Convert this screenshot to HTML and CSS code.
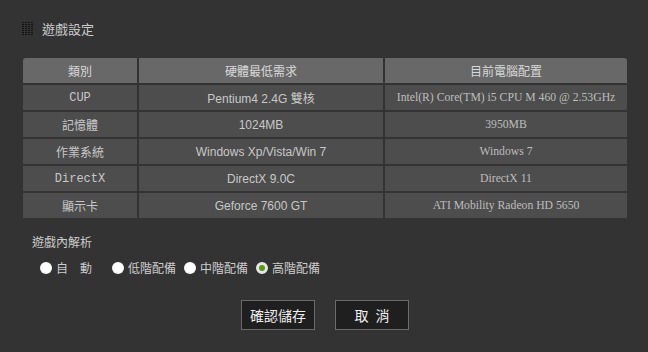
FILE: index.html
```html
<!DOCTYPE html>
<html lang="zh-Hant">
<head>
    <meta charset="UTF-8">
    <meta name="viewport" content="width=device-width, initial-scale=1.0">
    <title>遊戲設定</title>
    <link rel="stylesheet" href="styles.css">
</head>
<body>
    <div class="panel">
        <div class="title">
            <svg class="title-icon" width="12" height="14" viewBox="0 0 12 14">
                <defs>
                    <pattern id="dots" width="3" height="2" patternUnits="userSpaceOnUse">
                        <rect x="0" y="0" width="2" height="1" fill="#111"/>
                    </pattern>
                </defs>
                <rect width="12" height="14" fill="url(#dots)"/>
            </svg>
            <span>遊戲設定</span>
        </div>

        <div class="spec-table">
            <div class="cell head first">類別</div>
            <div class="cell head">硬體最低需求</div>
            <div class="cell head last">目前電腦配置</div>

            <div class="cell mono">CUP</div>
            <div class="cell sans">Pentium4 2.4G 雙核</div>
            <div class="cell serif">Intel(R) Core(TM) i5 CPU M 460 @ 2.53GHz</div>

            <div class="cell">記憶體</div>
            <div class="cell sans">1024MB</div>
            <div class="cell serif">3950MB</div>

            <div class="cell">作業系統</div>
            <div class="cell sans">Windows Xp/Vista/Win 7</div>
            <div class="cell serif">Windows 7</div>

            <div class="cell mono">DirectX</div>
            <div class="cell sans">DirectX 9.0C</div>
            <div class="cell serif">DirectX 11</div>

            <div class="cell">顯示卡</div>
            <div class="cell sans">Geforce 7600 GT</div>
            <div class="cell serif">ATI Mobility Radeon HD 5650</div>
        </div>

        <div class="resolution">
            <div class="res-label">遊戲內解析</div>
            <div class="radios">
                <label class="radio"><span class="dot"></span><span class="radio-text">自　動</span></label>
                <label class="radio"><span class="dot"></span><span class="radio-text">低階配備</span></label>
                <label class="radio"><span class="dot"></span><span class="radio-text">中階配備</span></label>
                <label class="radio"><span class="dot checked"></span><span class="radio-text">高階配備</span></label>
            </div>
        </div>

        <div class="actions">
            <button class="btn">確認儲存</button>
            <button class="btn">取&ensp;消</button>
        </div>
    </div>
</body>
</html>
```

FILE: styles.css
```css
body {
    margin: 0;
    background: #333333;
    font-family: "Noto Sans CJK TC", "Liberation Sans", sans-serif;
    color: #cccccc;
}

.panel {
    width: 648px;
    height: 352px;
    box-sizing: border-box;
    padding: 21px 21px 0 23px;
}

/* titulo */
.title {
    display: flex;
    align-items: center;
    gap: 8px;
    height: 15px;
    font-size: 13px;
    color: #cccccc;
    margin-left: -1px;
}

.title-icon {
    display: block;
}

/* tabla de requisitos */
.spec-table {
    margin-top: 22px;
    width: 604px;
    display: grid;
    grid-template-columns: 114px 244px 1fr;
    grid-auto-rows: 25px;
    gap: 2px;
}

.cell {
    background: #4d4d4d;
    display: flex;
    align-items: center;
    justify-content: center;
    font-size: 12px;
    color: #c8c8c8;
    white-space: nowrap;
}

.cell.head {
    background: #686868;
    color: #d8d8d8;
}

.cell.head.first { border-top-left-radius: 3px; }
.cell.head.last { border-top-right-radius: 3px; }

.cell.mono {
    font-family: "Liberation Mono", monospace;
    font-size: 12px;
}

.cell.sans {
    font-family: "Liberation Sans", "Noto Sans CJK TC", sans-serif;
    font-size: 12px;
}

.cell.serif {
    font-family: "Liberation Serif", serif;
    font-size: 11.7px;
    color: #bdbdbd;
}

/* resolucion */
.resolution {
    padding-left: 9px;
    margin-top: 16px;
}

.res-label {
    font-size: 12px;
    line-height: 16px;
}

.radios {
    display: flex;
    gap: 8px;
    margin-top: 10px;
    padding-left: 8px;
}

.radio {
    display: flex;
    align-items: center;
    gap: 4px;
    font-size: 12px;
    line-height: 16px;
}

.radio-text {
    min-width: 48px;
}

.dot {
    width: 12px;
    height: 12px;
    border-radius: 50%;
    background: #ffffff;
    box-sizing: border-box;
}

.dot.checked {
    border: 3px solid #e6e6e6;
    background: #5a9a10;
}

/* botones */
.actions {
    display: flex;
    justify-content: center;
    gap: 20px;
    margin-top: 24px;
}

.btn {
    width: 74px;
    height: 30px;
    background: #1f1f1f;
    border: 1px solid #6a6a6a;
    color: #eeeeee;
    font-family: "Noto Sans CJK TC", sans-serif;
    font-size: 14px;
    padding: 0;
}
```
